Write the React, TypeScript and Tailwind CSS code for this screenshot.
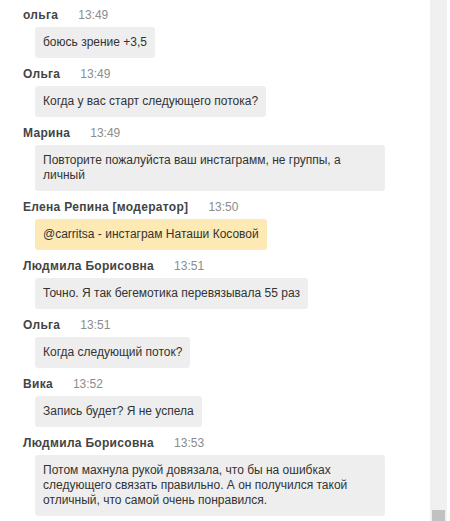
type Msg = {
  name: string;
  time: string;
  lines: string[];
  mod?: boolean;
};

const messages: Msg[] = [
  { name: "ольга", time: "13:49", lines: ["боюсь зрение +3,5"] },
  { name: "Ольга", time: "13:49", lines: ["Когда у вас старт следующего потока?"] },
  {
    name: "Марина",
    time: "13:49",
    lines: ["Повторите пожалуйста ваш инстаграмм, не группы, а", "личный"],
  },
  {
    name: "Елена Репина [модератор]",
    time: "13:50",
    lines: ["@carritsa - инстаграм Наташи Косовой"],
    mod: true,
  },
  {
    name: "Людмила Борисовна",
    time: "13:51",
    lines: ["Точно. Я так бегемотика перевязывала 55 раз"],
  },
  { name: "Ольга", time: "13:51", lines: ["Когда следующий поток?"] },
  { name: "Вика", time: "13:52", lines: ["Запись будет? Я не успела"] },
  {
    name: "Людмила Борисовна",
    time: "13:53",
    lines: [
      "Потом махнула рукой довязала, что бы на ошибках",
      "следующего связать правильно. А он получился такой",
      "отличный, что самой очень понравился.",
    ],
  },
];

function Message({ m }: { m: Msg }) {
  const wide = m.lines.length > 1;
  return (
    <div className="pb-[7px]">
      <div className="flex items-center h-[18px] pl-[23px] gap-[20px]">
        <span className="font-bold text-[#444] tracking-[0.3px]">{m.name}</span>
        <span className="text-[#8c8c8c]">{m.time}</span>
      </div>
      <div className="pl-[35px] mt-[3px]">
        <div
          className={`inline-block rounded-[3px] px-2 py-2 leading-[15px] text-[#333] ${
            m.mod ? "bg-[#fde9b3]" : "bg-[#eeeeee]"
          } ${wide ? "w-[350px]" : ""}`}
        >
          {m.lines.map((l, i) => (
            <div key={i} className="whitespace-nowrap">
              {l}
            </div>
          ))}
        </div>
      </div>
    </div>
  );
}

export default function App() {
  return (
    <div
      className="flex h-[521px] w-[450px] overflow-hidden bg-white text-[12px]"
      style={{ fontFamily: '"Liberation Sans", Arial, sans-serif' }}
    >
      <div className="flex-1 pt-[6px]">
        {messages.map((m, i) => (
          <Message key={i} m={m} />
        ))}
      </div>
      <div className="w-[17px] bg-[#f0f0f0] flex flex-col justify-end items-center mr-[3px]">
        <div className="w-[13px] h-[11px] bg-[#c1c1c1]" />
      </div>
    </div>
  );
}
